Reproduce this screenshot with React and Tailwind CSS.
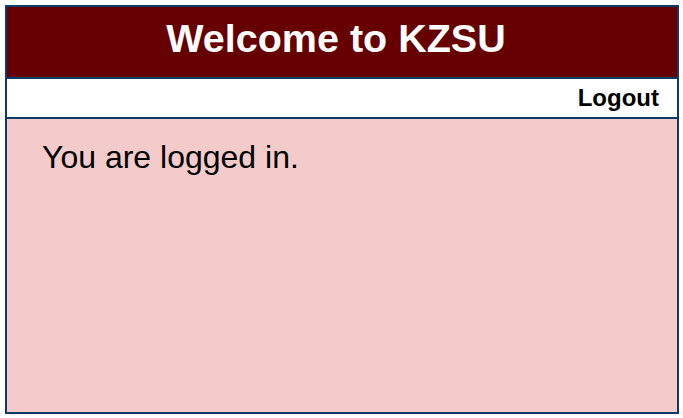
export default function App() {
    return (
        <div className="min-h-screen bg-white pt-[5px] pl-[5px]" style={{ fontFamily: '"Liberation Sans", Arial, sans-serif' }}>
            <div className="w-[674px] h-[409px] border-2 border-[#0d3a66] flex flex-col">
                {/* Header */}
                <div className="h-[72px] shrink-0 bg-[#660000] border-b-2 border-[#0d3a66] flex justify-center pt-[12px] pr-[12px]">
                    <h1 className="text-[39.5px] leading-none font-bold text-white">Welcome to KZSU</h1>
                </div>

                {/* Nav bar */}
                <div className="h-[40px] shrink-0 bg-white border-b-2 border-[#0d3a66] flex items-center justify-end pr-[18px]">
                    <button className="text-[24px] leading-none font-bold text-black">Logout</button>
                </div>

                {/* Content */}
                <div className="flex-1 bg-[#f3cbcb] pl-[35px] pt-[14px]">
                    <p className="text-[32px] text-black">You are logged in.</p>
                </div>
            </div>
        </div>
    );
}
